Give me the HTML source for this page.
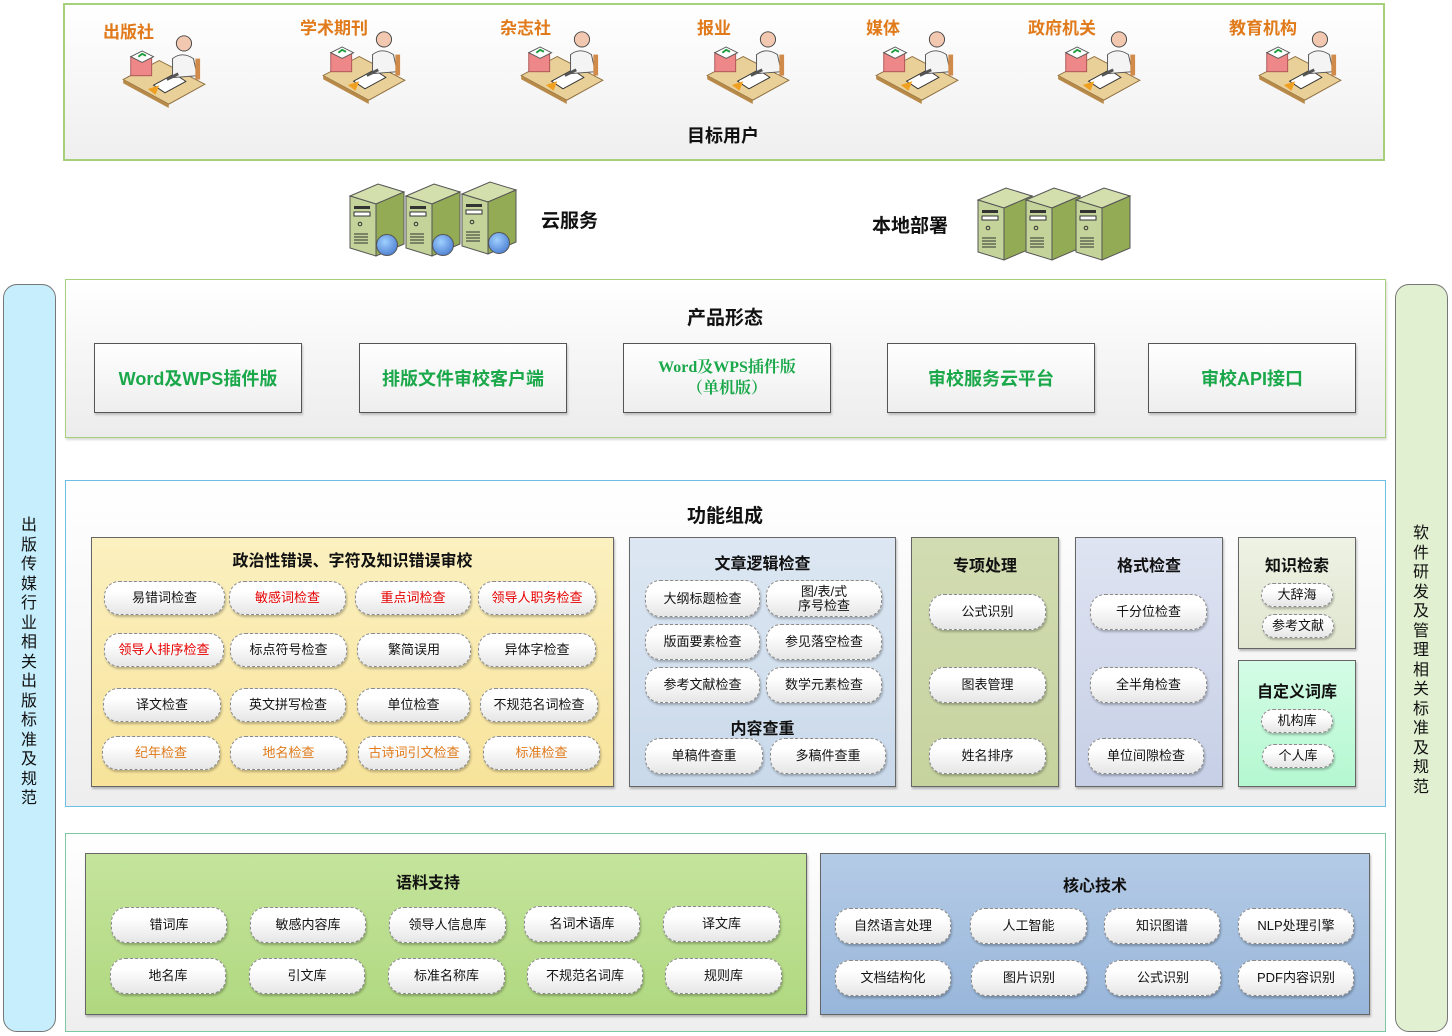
<!DOCTYPE html>
<html><head><meta charset="utf-8"><style>
*{margin:0;padding:0;box-sizing:border-box}
body{width:1452px;height:1036px;background:#fff;position:relative;overflow:hidden;font-family:"Liberation Sans","Noto Sans CJK SC",sans-serif;color:#111}
.a{position:absolute}
.p{position:absolute;display:flex;align-items:center;justify-content:center;text-align:center;font-size:13px;line-height:14px;background:linear-gradient(#fff 30%,#e6e6e6);border:1px dashed #8a8a8a;border-radius:15px;box-shadow:1px 2px 2px rgba(0,0,0,.25)}
.r{color:#e60000}.o{color:#e07a1a}
.t{position:absolute;font-weight:bold;font-size:17px;text-align:center;white-space:nowrap}
.box{position:absolute;border:1px solid #666;box-shadow:1px 2px 2px rgba(0,0,0,.25)}
.ul{position:absolute;color:#e07a1a;font-weight:bold;font-size:17px}
.prod{position:absolute;top:343px;width:208px;height:70px;border:1px solid #555;background:linear-gradient(#fff,#eee);box-shadow:1px 2px 2px rgba(0,0,0,.2);display:flex;align-items:center;justify-content:center;text-align:center;color:#1aa84a;font-weight:bold;font-size:18px}
.vt{position:absolute;font-size:16px;line-height:19.5px;width:20px;text-align:center}
</style></head><body>
<svg width="0" height="0" style="position:absolute">
<defs>
<symbol id="u" viewBox="0 0 90 80">
<polygon points="2,50 40,30 88,55 50,76" fill="#e9cf98" stroke="#8a6a3a"/>
<polygon points="2,50 50,76 50,80 2,54" fill="#b88a4a"/>
<rect x="10" y="26" width="22" height="20" fill="#e88" stroke="#a55"/>
<polygon points="10,26 22,20 34,26 22,32" fill="#fff" stroke="#555"/>
<path d="M18 26 l4 -3 l4 2" stroke="#1b9e3e" stroke-width="2" fill="none"/>
<polygon points="34,56 56,44 68,52 46,64" fill="#fff" stroke="#333"/>
<polygon points="28,60 40,56 36,66" fill="#f0a020"/>
<circle cx="66" cy="12" r="8" fill="#f2c8b0" stroke="#444"/>
<path d="M54 48 l0 -20 q10 -8 22 0 l4 18 z" fill="#f4f4f4" stroke="#555"/>
<path d="M48 50 l12 -6" stroke="#555" stroke-width="3"/>
<rect x="78" y="28" width="5" height="22" fill="#d08a4a"/>
</symbol>
<symbol id="s" viewBox="0 0 58 76">
<polygon points="2,14 30,2 56,10 28,22" fill="#d4dfae" stroke="#555"/>
<polygon points="2,14 28,22 28,74 2,66" fill="#c3d39a" stroke="#555"/>
<polygon points="28,22 56,10 56,62 28,74" fill="#93ab55" stroke="#555"/>
<rect x="6" y="24" width="16" height="3" fill="#333"/><rect x="6" y="30" width="16" height="4" fill="#fff" stroke="#333"/>
<circle cx="12" cy="42" r="1.8" fill="none" stroke="#333"/>
<path d="M6 52h14M6 55h14M6 58h14M6 61h14" stroke="#333"/>
</symbol>
</defs></svg>

<!-- top -->
<div class="a" style="left:63px;top:3px;width:1322px;height:158px;border:2px solid #a6d07a;background:linear-gradient(#fff,#efefef)"></div>
<div class="ul" style="left:103px;top:18px">出版社</div>
<div class="ul" style="left:300px;top:14px">学术期刊</div>
<div class="ul" style="left:500px;top:14px">杂志社</div>
<div class="ul" style="left:697px;top:14px">报业</div>
<div class="ul" style="left:866px;top:14px">媒体</div>
<div class="ul" style="left:1028px;top:14px">政府机关</div>
<div class="ul" style="left:1229px;top:14px">教育机构</div>
<svg class="a" style="left:120px;top:32px" width="88" height="76"><use href="#u"/></svg>
<svg class="a" style="left:320px;top:28px" width="88" height="76"><use href="#u"/></svg>
<svg class="a" style="left:518px;top:28px" width="88" height="76"><use href="#u"/></svg>
<svg class="a" style="left:704px;top:28px" width="88" height="76"><use href="#u"/></svg>
<svg class="a" style="left:873px;top:28px" width="88" height="76"><use href="#u"/></svg>
<svg class="a" style="left:1055px;top:28px" width="88" height="76"><use href="#u"/></svg>
<svg class="a" style="left:1256px;top:28px" width="88" height="76"><use href="#u"/></svg>
<div class="t" style="left:663px;top:122px;width:120px;font-size:18px">目标用户</div>

<!-- servers -->
<svg class="a" style="left:348px;top:182px" width="58" height="76"><use href="#s"/></svg>
<svg class="a" style="left:404px;top:182px" width="58" height="76"><use href="#s"/></svg>
<svg class="a" style="left:460px;top:180px" width="58" height="76"><use href="#s"/></svg>
<div class="a" style="left:376px;top:234px;width:22px;height:22px;border-radius:50%;background:radial-gradient(circle at 40% 35%,#9fd0ff,#3a6cc8);border:1px solid #555"></div>
<div class="a" style="left:432px;top:234px;width:22px;height:22px;border-radius:50%;background:radial-gradient(circle at 40% 35%,#9fd0ff,#3a6cc8);border:1px solid #555"></div>
<div class="a" style="left:488px;top:232px;width:22px;height:22px;border-radius:50%;background:radial-gradient(circle at 40% 35%,#9fd0ff,#3a6cc8);border:1px solid #555"></div>
<div class="t" style="left:541px;top:206px;font-size:19px">云服务</div>
<div class="t" style="left:872px;top:211px;font-size:19px">本地部署</div>
<svg class="a" style="left:976px;top:186px" width="58" height="76"><use href="#s"/></svg>
<svg class="a" style="left:1024px;top:186px" width="58" height="76"><use href="#s"/></svg>
<svg class="a" style="left:1074px;top:186px" width="58" height="76"><use href="#s"/></svg>

<!-- side bars -->
<div class="a" style="left:3px;top:284px;width:53px;height:748px;border:1px solid #777;border-radius:14px;background:#c6eefc"></div>
<div class="vt" style="left:19px;top:516px">出版传媒行业相关出版标准及规范</div>
<div class="a" style="left:1395px;top:284px;width:53px;height:748px;border:1px solid #777;border-radius:14px;background:#e2f0d2"></div>
<div class="vt" style="left:1411px;top:524px">软件研发及管理相关标准及规范</div>

<!-- product -->
<div class="a" style="left:65px;top:279px;width:1321px;height:159px;border:1px solid #a6d07a;background:linear-gradient(#fff,#ececec);box-shadow:1px 2px 2px rgba(0,0,0,.15)"></div>
<div class="t" style="left:665px;top:303px;width:120px;font-size:19px">产品形态</div>
<div class="prod" style="left:94px">Word及WPS插件版</div>
<div class="prod" style="left:359px">排版文件审校客户端</div>
<div class="prod" style="left:623px;font-size:16px;line-height:21px;font-weight:normal;font-family:'Liberation Serif','Noto Serif CJK SC',serif;font-weight:bold">Word及WPS插件版<br>（单机版）</div>
<div class="prod" style="left:887px">审校服务云平台</div>
<div class="prod" style="left:1148px">审校API接口</div>

<!-- function -->
<div class="a" style="left:65px;top:480px;width:1321px;height:327px;border:1px solid #6cc0e6;background:linear-gradient(#fff,#eee)"></div>
<div class="t" style="left:665px;top:501px;width:120px;font-size:19px">功能组成</div>

<div class="box" style="left:91px;top:537px;width:523px;height:250px;background:linear-gradient(#fbf0c0,#f7e39a)"></div>
<div class="t" style="left:91px;top:547px;width:523px;font-size:16px">政治性错误、字符及知识错误审校</div>
<div class="p" style="left:104px;top:581px;width:121px;height:34px">易错词检查</div>
<div class="p r" style="left:229px;top:581px;width:117px;height:34px">敏感词检查</div>
<div class="p r" style="left:355px;top:581px;width:116px;height:34px">重点词检查</div>
<div class="p r" style="left:478px;top:581px;width:118px;height:34px">领导人职务检查</div>
<div class="p r" style="left:104px;top:633px;width:120px;height:34px">领导人排序检查</div>
<div class="p" style="left:230px;top:633px;width:117px;height:34px">标点符号检查</div>
<div class="p" style="left:357px;top:633px;width:114px;height:34px">繁简误用</div>
<div class="p" style="left:478px;top:633px;width:118px;height:34px">异体字检查</div>
<div class="p" style="left:103px;top:688px;width:118px;height:34px">译文检查</div>
<div class="p" style="left:230px;top:688px;width:116px;height:34px">英文拼写检查</div>
<div class="p" style="left:357px;top:688px;width:113px;height:34px">单位检查</div>
<div class="p" style="left:480px;top:688px;width:118px;height:34px">不规范名词检查</div>
<div class="p o" style="left:102px;top:736px;width:118px;height:34px">纪年检查</div>
<div class="p o" style="left:230px;top:736px;width:117px;height:34px">地名检查</div>
<div class="p o" style="left:358px;top:736px;width:112px;height:34px">古诗词引文检查</div>
<div class="p o" style="left:483px;top:736px;width:117px;height:34px">标准检查</div>

<div class="box" style="left:629px;top:537px;width:267px;height:250px;background:linear-gradient(#dde7f3,#c9d9ea)"></div>
<div class="t" style="left:629px;top:550px;width:267px;font-size:16px">文章逻辑检查</div>
<div class="p" style="left:645px;top:580px;width:115px;height:37px">大纲标题检查</div>
<div class="p" style="left:766px;top:580px;width:116px;height:37px">图/表/式<br>序号检查</div>
<div class="p" style="left:645px;top:624px;width:115px;height:36px">版面要素检查</div>
<div class="p" style="left:766px;top:624px;width:116px;height:36px">参见落空检查</div>
<div class="p" style="left:645px;top:667px;width:115px;height:36px">参考文献检查</div>
<div class="p" style="left:766px;top:667px;width:116px;height:36px">数学元素检查</div>
<div class="t" style="left:629px;top:715px;width:267px;font-size:16px">内容查重</div>
<div class="p" style="left:645px;top:738px;width:118px;height:36px">单稿件查重</div>
<div class="p" style="left:770px;top:738px;width:116px;height:36px">多稿件查重</div>

<div class="box" style="left:911px;top:537px;width:148px;height:250px;background:linear-gradient(#d2dcb2,#c6d39e)"></div>
<div class="t" style="left:911px;top:552px;width:148px;font-size:16px">专项处理</div>
<div class="p" style="left:929px;top:594px;width:117px;height:36px">公式识别</div>
<div class="p" style="left:929px;top:667px;width:117px;height:36px">图表管理</div>
<div class="p" style="left:929px;top:738px;width:117px;height:36px">姓名排序</div>

<div class="box" style="left:1075px;top:537px;width:148px;height:250px;background:linear-gradient(#dfe4f2,#c6cfe6)"></div>
<div class="t" style="left:1075px;top:552px;width:148px;font-size:16px">格式检查</div>
<div class="p" style="left:1090px;top:594px;width:117px;height:36px">千分位检查</div>
<div class="p" style="left:1090px;top:667px;width:117px;height:36px">全半角检查</div>
<div class="p" style="left:1088px;top:738px;width:116px;height:36px">单位间隙检查</div>

<div class="box" style="left:1238px;top:537px;width:118px;height:112px;background:linear-gradient(#eef2e4,#e0e6cf)"></div>
<div class="t" style="left:1238px;top:552px;width:118px;font-size:16px">知识检索</div>
<div class="p" style="left:1261px;top:583px;width:72px;height:24px;border-radius:12px">大辞海</div>
<div class="p" style="left:1262px;top:614px;width:72px;height:24px;border-radius:12px">参考文献</div>

<div class="box" style="left:1238px;top:660px;width:118px;height:127px;background:linear-gradient(#d4fce6,#b4f8d0)"></div>
<div class="t" style="left:1238px;top:678px;width:118px;font-size:16px">自定义词库</div>
<div class="p" style="left:1261px;top:709px;width:72px;height:24px;border-radius:12px">机构库</div>
<div class="p" style="left:1262px;top:744px;width:72px;height:24px;border-radius:12px">个人库</div>

<!-- bottom -->
<div class="a" style="left:65px;top:833px;width:1321px;height:199px;border:1px solid #7cc8a0;background:linear-gradient(#fff,#eee)"></div>
<div class="box" style="left:85px;top:853px;width:722px;height:162px;background:linear-gradient(#c4e49c,#b0d880)"></div>
<div class="t" style="left:85px;top:869px;width:686px;font-size:16px">语料支持</div>
<div class="p" style="left:111px;top:907px;width:116px;height:36px">错词库</div>
<div class="p" style="left:250px;top:907px;width:116px;height:36px">敏感内容库</div>
<div class="p" style="left:389px;top:907px;width:117px;height:36px">领导人信息库</div>
<div class="p" style="left:524px;top:906px;width:116px;height:36px">名词术语库</div>
<div class="p" style="left:663px;top:906px;width:117px;height:36px">译文库</div>
<div class="p" style="left:110px;top:958px;width:116px;height:36px">地名库</div>
<div class="p" style="left:249px;top:958px;width:116px;height:36px">引文库</div>
<div class="p" style="left:388px;top:958px;width:117px;height:36px">标准名称库</div>
<div class="p" style="left:527px;top:958px;width:116px;height:36px">不规范名词库</div>
<div class="p" style="left:665px;top:958px;width:117px;height:36px">规则库</div>

<div class="box" style="left:820px;top:853px;width:550px;height:162px;background:linear-gradient(#b4cbe6,#98b6da)"></div>
<div class="t" style="left:820px;top:872px;width:550px;font-size:16px">核心技术</div>
<div class="p" style="left:835px;top:908px;width:116px;height:36px">自然语言处理</div>
<div class="p" style="left:970px;top:908px;width:117px;height:36px">人工智能</div>
<div class="p" style="left:1104px;top:908px;width:116px;height:36px">知识图谱</div>
<div class="p" style="left:1238px;top:908px;width:116px;height:36px">NLP处理引擎</div>
<div class="p" style="left:835px;top:960px;width:116px;height:36px">文档结构化</div>
<div class="p" style="left:971px;top:960px;width:116px;height:36px">图片识别</div>
<div class="p" style="left:1105px;top:960px;width:116px;height:36px">公式识别</div>
<div class="p" style="left:1238px;top:960px;width:116px;height:36px">PDF内容识别</div>
</body></html>
